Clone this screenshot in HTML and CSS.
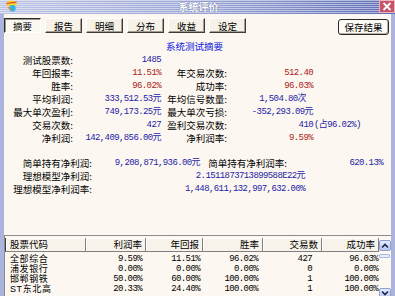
FILE: index.html
```html
<!DOCTYPE html>
<html lang="zh-CN">
<head>
  <meta charset="UTF-8" />
  <title>系统评价</title>
  <link rel="stylesheet" href="styles.css">
</head>
<body>

  <div class="window">
    <div class="titlebar">
      <svg class="app-icon" viewBox="0 0 13 12" width="13" height="12">
        <ellipse cx="6.5" cy="3.5" rx="5.5" ry="3" fill="#f6d22a"/>
        <path d="M1.5 3.5 L11.5 2" stroke="#e2343a" stroke-width="1.2"/>
        <circle cx="7.5" cy="8.2" r="3.2" fill="#2fb4e4"/>
        <path d="M3 7 L6 10" stroke="#f08a2a" stroke-width="1.4"/>
      </svg>
      <span class="title">系统评价</span>
      <span class="close-btn">
        <svg viewBox="0 0 10 9" width="10" height="9">
          <path d="M1.5 1 L8.5 8 M8.5 1 L1.5 8" stroke="#fff" stroke-width="1.8"/>
        </svg>
      </span>
    </div>

    <div class="frame">
      <div class="toolbar">
        <div class="tabs">
          <button class="tab active">摘要</button>
          <button class="tab">报告</button>
          <button class="tab">明细</button>
          <button class="tab">分布</button>
          <button class="tab">收益</button>
          <button class="tab">设定</button>
        </div>
        <button class="save-btn">保存结果</button>
      </div>

      <div class="summary">
        <h3 class="summary-title">系统测试摘要</h3>

        <div class="stats stats-main">
          <span class="label">测试股票数:</span><span class="val">1485</span><span></span><span></span><span></span>
          <span class="label">年回报率:</span><span class="val red">11.51%</span><span class="label">年交易次数:</span><span class="val red">512.40</span><span></span>
          <span class="label">胜率:</span><span class="val red">96.02%</span><span class="label">成功率:</span><span class="val red">96.03%</span><span></span>
          <span class="label">平均利润:</span><span class="val">333,512.53元</span><span class="label">年均信号数量:</span><span class="val short">1,504.80次</span><span></span>
          <span class="label">最大单次盈利:</span><span class="val">749,173.25元</span><span class="label">最大单次亏损:</span><span class="val">-352,293.09元</span><span></span>
          <span class="label">交易次数:</span><span class="val">427</span><span class="label">盈利交易次数:</span><span class="val">410</span><span class="note">(占96.02%)</span>
          <span class="label">净利润:</span><span class="val">142,409,856.00元</span><span class="label">净利润率:</span><span class="val red">9.59%</span><span></span>
        </div>

        <div class="stats stats-hold">
          <span class="label">简单持有净利润:</span><span class="val">9,208,871,936.00元</span><span class="label">简单持有净利润率:</span><span class="val">620.13%</span>
          <span class="label">理想模型净利润:</span><span class="val wide">2.1511873713899588E22元</span>
          <span class="label">理想模型净利润率:</span><span class="val wide">1,448,611,132,997,632.00%</span>
        </div>
      </div>

      <div class="list">
        <div class="list-main">
          <div class="list-head">
            <span>股票代码</span><span>利润率</span><span>年回报</span><span>胜率</span><span>交易数</span><span>成功率</span>
          </div>
          <div class="list-body">
            <div class="list-row"><span>全部综合</span><span>9.59%</span><span>11.51%</span><span>96.02%</span><span>427</span><span>96.03%</span></div>
            <div class="list-row"><span>浦发银行</span><span>0.00%</span><span>0.00%</span><span>0.00%</span><span>0</span><span>0.00%</span></div>
            <div class="list-row"><span>邯郸钢铁</span><span>50.00%</span><span>60.00%</span><span>100.00%</span><span>1</span><span>100.00%</span></div>
            <div class="list-row"><span>ST东北高</span><span>20.33%</span><span>24.40%</span><span>100.00%</span><span>1</span><span>100.00%</span></div>
          </div>
        </div>
        <div class="scroll">
          <span class="scroll-btn">
            <svg viewBox="0 0 10 7" width="10" height="7"><polyline points="2,5.5 5,2.5 8,5.5" fill="none" stroke="#1c2450" stroke-width="1.6"/></svg>
          </span>
          <span class="scroll-thumb"></span>
          <span class="scroll-btn down">
            <svg viewBox="0 0 10 7" width="10" height="7"><polyline points="2,1.5 5,4.5 8,1.5" fill="none" stroke="#1c2450" stroke-width="1.6"/></svg>
          </span>
        </div>
      </div>
    </div>
  </div>

</body>
</html>
```

FILE: styles.css
```css
:root {
  --bg-color: #fcf8f1;
  --frame-color: #aab4dc;
  --blue: #1c1ca6;
  --red: #ac1a1a;
  --cjk: "Noto Sans CJK SC", sans-serif;
  --num: "Liberation Mono", "Noto Sans CJK SC", monospace;
}

html, body {
  margin: 0;
}

body {
  background-color: var(--bg-color);
  font-family: var(--cjk);
  font-size: 9.5px;
  color: #000;
}

.window {
  width: 395px;
  height: 296px;
  overflow: hidden;
  display: flex;
  flex-direction: column;
}

/* title bar */
.titlebar {
  height: 14px;
  flex: none;
  display: flex;
  align-items: flex-start;
  background:
    repeating-linear-gradient(to bottom, rgba(255,255,255,0.5) 0 1px, transparent 1px 2px),
    linear-gradient(to right, #bcc4e4, #96a2d4 55%, #5e6cb4);
}

.app-icon {
  margin-left: 5px;
  flex: none;
}

.title {
  flex: 1;
  text-align: center;
  color: #fff;
  font-size: 10px;
  font-weight: bold;
  line-height: 14px;
  text-shadow: 0 0 1px #3a4280;
}

.close-btn {
  width: 16px;
  height: 13px;
  box-sizing: border-box;
  background-color: #c8546a;
  border: 1px solid #eeb4c0;
  display: flex;
  align-items: center;
  justify-content: center;
}

.frame {
  flex: 1;
  min-height: 0;
  display: flex;
  flex-direction: column;
  border-left: 4px solid var(--frame-color);
  border-right: 4px solid var(--frame-color);
}

/* tabs */
.toolbar {
  height: 22px;
  flex: none;
  box-sizing: border-box;
  padding-top: 4px;
  display: flex;
  align-items: flex-start;
}

.tabs {
  display: flex;
  gap: 4px;
}

.tab {
  width: 37px;
  height: 15px;
  padding: 0;
  box-sizing: border-box;
  font-family: var(--cjk);
  font-size: 9.5px;
  line-height: 12px;
  color: #000;
  background-color: #f6f2e8;
  border: 1px solid;
  border-color: #fff #3c3c3c #3c3c3c #fff;
  box-shadow: inset -1px -1px #a49e92;
}

.tab.active {
  border-color: #2c2c2c #fff #fff #2c2c2c;
  box-shadow: inset 1px 1px #9a958a;
  background-color: #fbf8f2;
}

.save-btn {
  margin: 1px 2px 0 auto;
  width: 51px;
  height: 16px;
  padding: 0;
  box-sizing: border-box;
  font-family: var(--cjk);
  font-size: 9.5px;
  line-height: 13px;
  color: #000;
  background-color: #fdfbf6;
  border: 1px solid #2a2a2a;
  border-radius: 3px;
  box-shadow: inset -1px -1px #b8b2a6;
}

/* summary */
.summary {
  height: 199px;
  flex: none;
}

.summary-title {
  margin: 4px 0 1px;
  padding-right: 6px;
  text-align: center;
  font-size: 9.5px;
  font-weight: normal;
  line-height: 13px;
  color: #0c16e0;
}

.stats {
  display: grid;
  line-height: 13px;
  white-space: nowrap;
}

.stats-main {
  grid-template-columns: 70px 87px 67px 85px auto;
}

.stats-hold {
  grid-template-columns: 89px 107px 88px 95px;
  margin-top: 12px;
}

.label {
  text-align: right;
  padding-right: 1px;
}

.val {
  text-align: right;
  font-family: var(--num);
  font-size: 9px;
  letter-spacing: -0.6px;
  color: var(--blue);
}

.val.red {
  color: var(--red);
}

.val.short {
  padding-right: 7px;
}

.note {
  font-family: var(--num);
  font-size: 9px;
  letter-spacing: -0.6px;
  color: var(--blue);
  padding-left: 1px;
}

.wide {
  grid-column: 2 / 5;
  padding-right: 78px;
}

/* list */
.list {
  height: 66px;
  flex: none;
  display: flex;
  border-top: 1px solid #8c8c8c;
  border-left: 1px solid #8c8c8c;
}

.list-main {
  width: 374px;
  padding-top: 2px;
}

.list-head,
.list-row {
  display: grid;
  grid-template-columns: 81px 60px 57px 60px 59px 57px;
  white-space: nowrap;
}

.list-head span {
  height: 14px;
  box-sizing: border-box;
  line-height: 12px;
  padding-right: 3px;
  text-align: right;
  background-color: #f7f3eb;
  border-right: 1px solid #808080;
  border-bottom: 1px solid #808080;
  box-shadow: inset 1px 1px #fff;
}

.list-head span:first-child {
  text-align: left;
  padding-left: 4px;
  border-left: 1px solid #3c3c3c;
}

.list-body {
  padding-top: 2px;
}

.list-row {
  height: 10px;
  line-height: 10px;
}

.list-row span {
  text-align: right;
  font-family: var(--num);
  font-size: 9px;
  letter-spacing: -0.6px;
}

.list-row span:nth-child(1) {
  text-align: left;
  padding-left: 5px;
  font-family: "Liberation Sans", "Noto Sans CJK SC", sans-serif;
  font-size: 9px;
  letter-spacing: 0.6px;
}

.list-row span:nth-child(2) { padding-right: 4px; }
.list-row span:nth-child(3) { padding-right: 3px; }
.list-row span:nth-child(4) { padding-right: 5px; }
.list-row span:nth-child(5) { padding-right: 10px; }
.list-row span:nth-child(6) { padding-right: 1px; }

.scroll {
  width: 12px;
  display: flex;
  flex-direction: column;
}

.scroll-btn {
  width: 12px;
  height: 11px;
  margin-top: 4px;
  box-sizing: border-box;
  border: 1px solid #8c9ed2;
  border-radius: 2px;
  background: linear-gradient(#e4ebfc, #b9c8f0);
  display: flex;
  align-items: center;
  justify-content: center;
}

.scroll-btn.down {
  margin-top: auto;
  margin-bottom: 3px;
}

.scroll-thumb {
  width: 11px;
  height: 4px;
  margin-top: 3px;
  box-sizing: border-box;
  border: 1px solid #a8b8e4;
  border-radius: 1px;
  background-color: #e8eefc;
}
```
